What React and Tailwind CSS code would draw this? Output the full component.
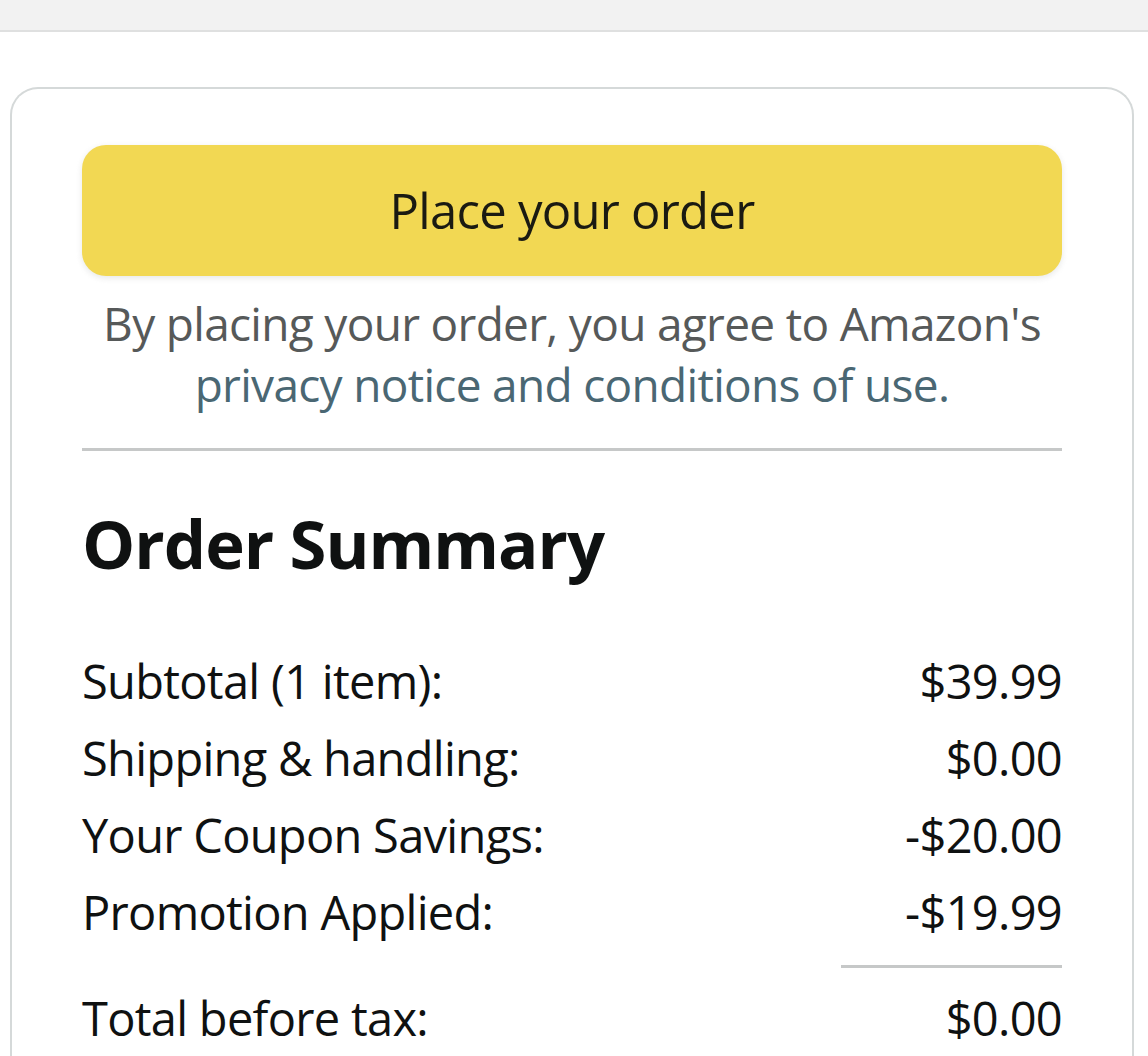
export default function App() {
  const rows = [
    ["Subtotal (1 item):", "$39.99"],
    ["Shipping & handling:", "$0.00"],
    ["Your Coupon Savings:", "-$20.00"],
    ["Promotion Applied:", "-$19.99"],
  ];
  return (
    <div className="w-[1148px] h-[1056px] overflow-hidden bg-white" style={{ fontFamily: "'Open Sans', 'Noto Sans', sans-serif" }}>
      <div className="h-[32px] bg-[#f2f2f2] border-b-2 border-[#dfe0e0]" />
      <div className="pt-[55px] pl-[10px] pr-[14px]">
        <div className="border-2 border-b-0 border-[#d5d9d9] rounded-t-[28px] px-[70px] pt-[56px] h-[1000px]">
          <button className="w-full h-[131px] rounded-[24px] bg-[#f2d853] shadow-[0_2px_6px_rgba(213,217,217,0.6)] text-[49px] text-[#1a1a12] tracking-[-0.015em]">
            Place your order
          </button>
          <p className="mt-[17px] text-center text-[46px] leading-[61px] text-[#565959] tracking-[-0.015em]">
            By placing your order, you agree to Amazon's
            <br />
            <span className="text-[#4a6773]">privacy notice and conditions of use.</span>
          </p>
          <div className="mt-[33px] h-[3px] bg-[#c6c8c8]" />
          <h2 className="mt-[54px] text-[67px] leading-[77px] font-bold text-[#0f1111] tracking-[-0.015em]">Order Summary</h2>
          <div className="mt-[61px]">
            {rows.map(([l, v]) => (
              <div key={l} className="flex justify-between text-[47px] leading-[77px] text-[#0f1111] tracking-[-0.015em]">
                <span>{l}</span>
                <span>{v}</span>
              </div>
            ))}
          </div>
          <div className="mt-[14px] ml-auto w-[221px] h-[3px] bg-[#c6c8c8]" />
          <div className="mt-[12px] flex justify-between text-[47px] leading-[77px] text-[#0f1111] tracking-[-0.015em]">
            <span>Total before tax:</span>
            <span>$0.00</span>
          </div>
        </div>
      </div>
    </div>
  );
}
